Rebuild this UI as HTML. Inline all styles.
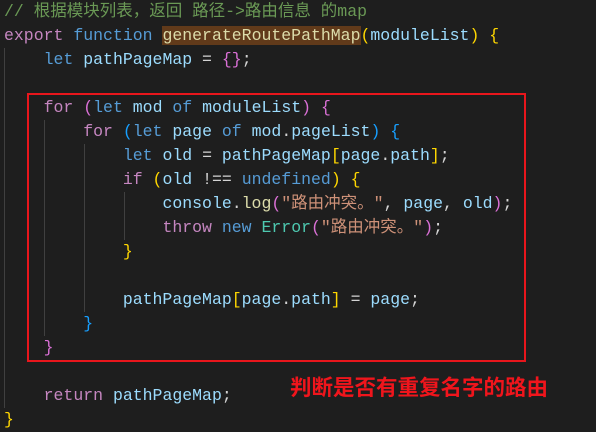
<!DOCTYPE html><html><head><style>
body{margin:0;background:#1e1e1e;width:596px;height:429px;overflow:hidden;position:relative}
pre{margin:0;position:absolute;left:4px;top:0;font-family:"Liberation Mono","Noto Sans CJK SC",monospace;font-size:16.5px;line-height:24px;color:#d4d4d4}
.c{color:#6a9955}.k{color:#c586c0}.b{color:#569cd6}.v{color:#9cdcfe}.f{color:#dcdcaa}.s{color:#ce9178}.t{color:#4ec9b0}
.y{color:#ffd700}.p{color:#da70d6}.l{color:#179fff}
.hl{background:#613a1a}
.g{position:absolute;width:1px;background:#404040}
.box{position:absolute;left:27px;top:93px;width:495px;height:265px;border:2px solid #e8161c}
.note{position:absolute;left:290px;top:373px;color:#f0151c;font:bold 21.5px "Noto Sans CJK SC",sans-serif;line-height:28px}
</style></head><body>
<div class="g" style="left:4px;top:48px;height:360px"></div>
<div class="g" style="left:44px;top:120px;height:216px"></div>
<div class="g" style="left:84px;top:144px;height:168px"></div>
<div class="g" style="left:124px;top:192px;height:48px"></div>
<pre><span class="c">// 根据模块列表，返回 路径-&gt;路由信息 的map</span>
<span class="k">export</span> <span class="b">function</span> <span class="f hl">generateRoutePathMap</span><span class="y">(</span><span class="v">moduleList</span><span class="y">)</span> <span class="y">{</span>
    <span class="b">let</span> <span class="v">pathPageMap</span> = <span class="p">{}</span>;

    <span class="k">for</span> <span class="p">(</span><span class="b">let</span> <span class="v">mod</span> <span class="b">of</span> <span class="v">moduleList</span><span class="p">)</span> <span class="p">{</span>
        <span class="k">for</span> <span class="l">(</span><span class="b">let</span> <span class="v">page</span> <span class="b">of</span> <span class="v">mod</span>.<span class="v">pageList</span><span class="l">)</span> <span class="l">{</span>
            <span class="b">let</span> <span class="v">old</span> = <span class="v">pathPageMap</span><span class="y">[</span><span class="v">page</span>.<span class="v">path</span><span class="y">]</span>;
            <span class="k">if</span> <span class="y">(</span><span class="v">old</span> !== <span class="b">undefined</span><span class="y">)</span> <span class="y">{</span>
                <span class="v">console</span>.<span class="f">log</span><span class="p">(</span><span class="s">"路由冲突。"</span>, <span class="v">page</span>, <span class="v">old</span><span class="p">)</span>;
                <span class="k">throw</span> <span class="b">new</span> <span class="t">Error</span><span class="p">(</span><span class="s">"路由冲突。"</span><span class="p">)</span>;
            <span class="y">}</span>

            <span class="v">pathPageMap</span><span class="y">[</span><span class="v">page</span>.<span class="v">path</span><span class="y">]</span> = <span class="v">page</span>;
        <span class="l">}</span>
    <span class="p">}</span>

    <span class="k">return</span> <span class="v">pathPageMap</span>;
<span class="y">}</span></pre>
<div class="box"></div>
<div class="note">判断是否有重复名字的路由</div>
</body></html>
